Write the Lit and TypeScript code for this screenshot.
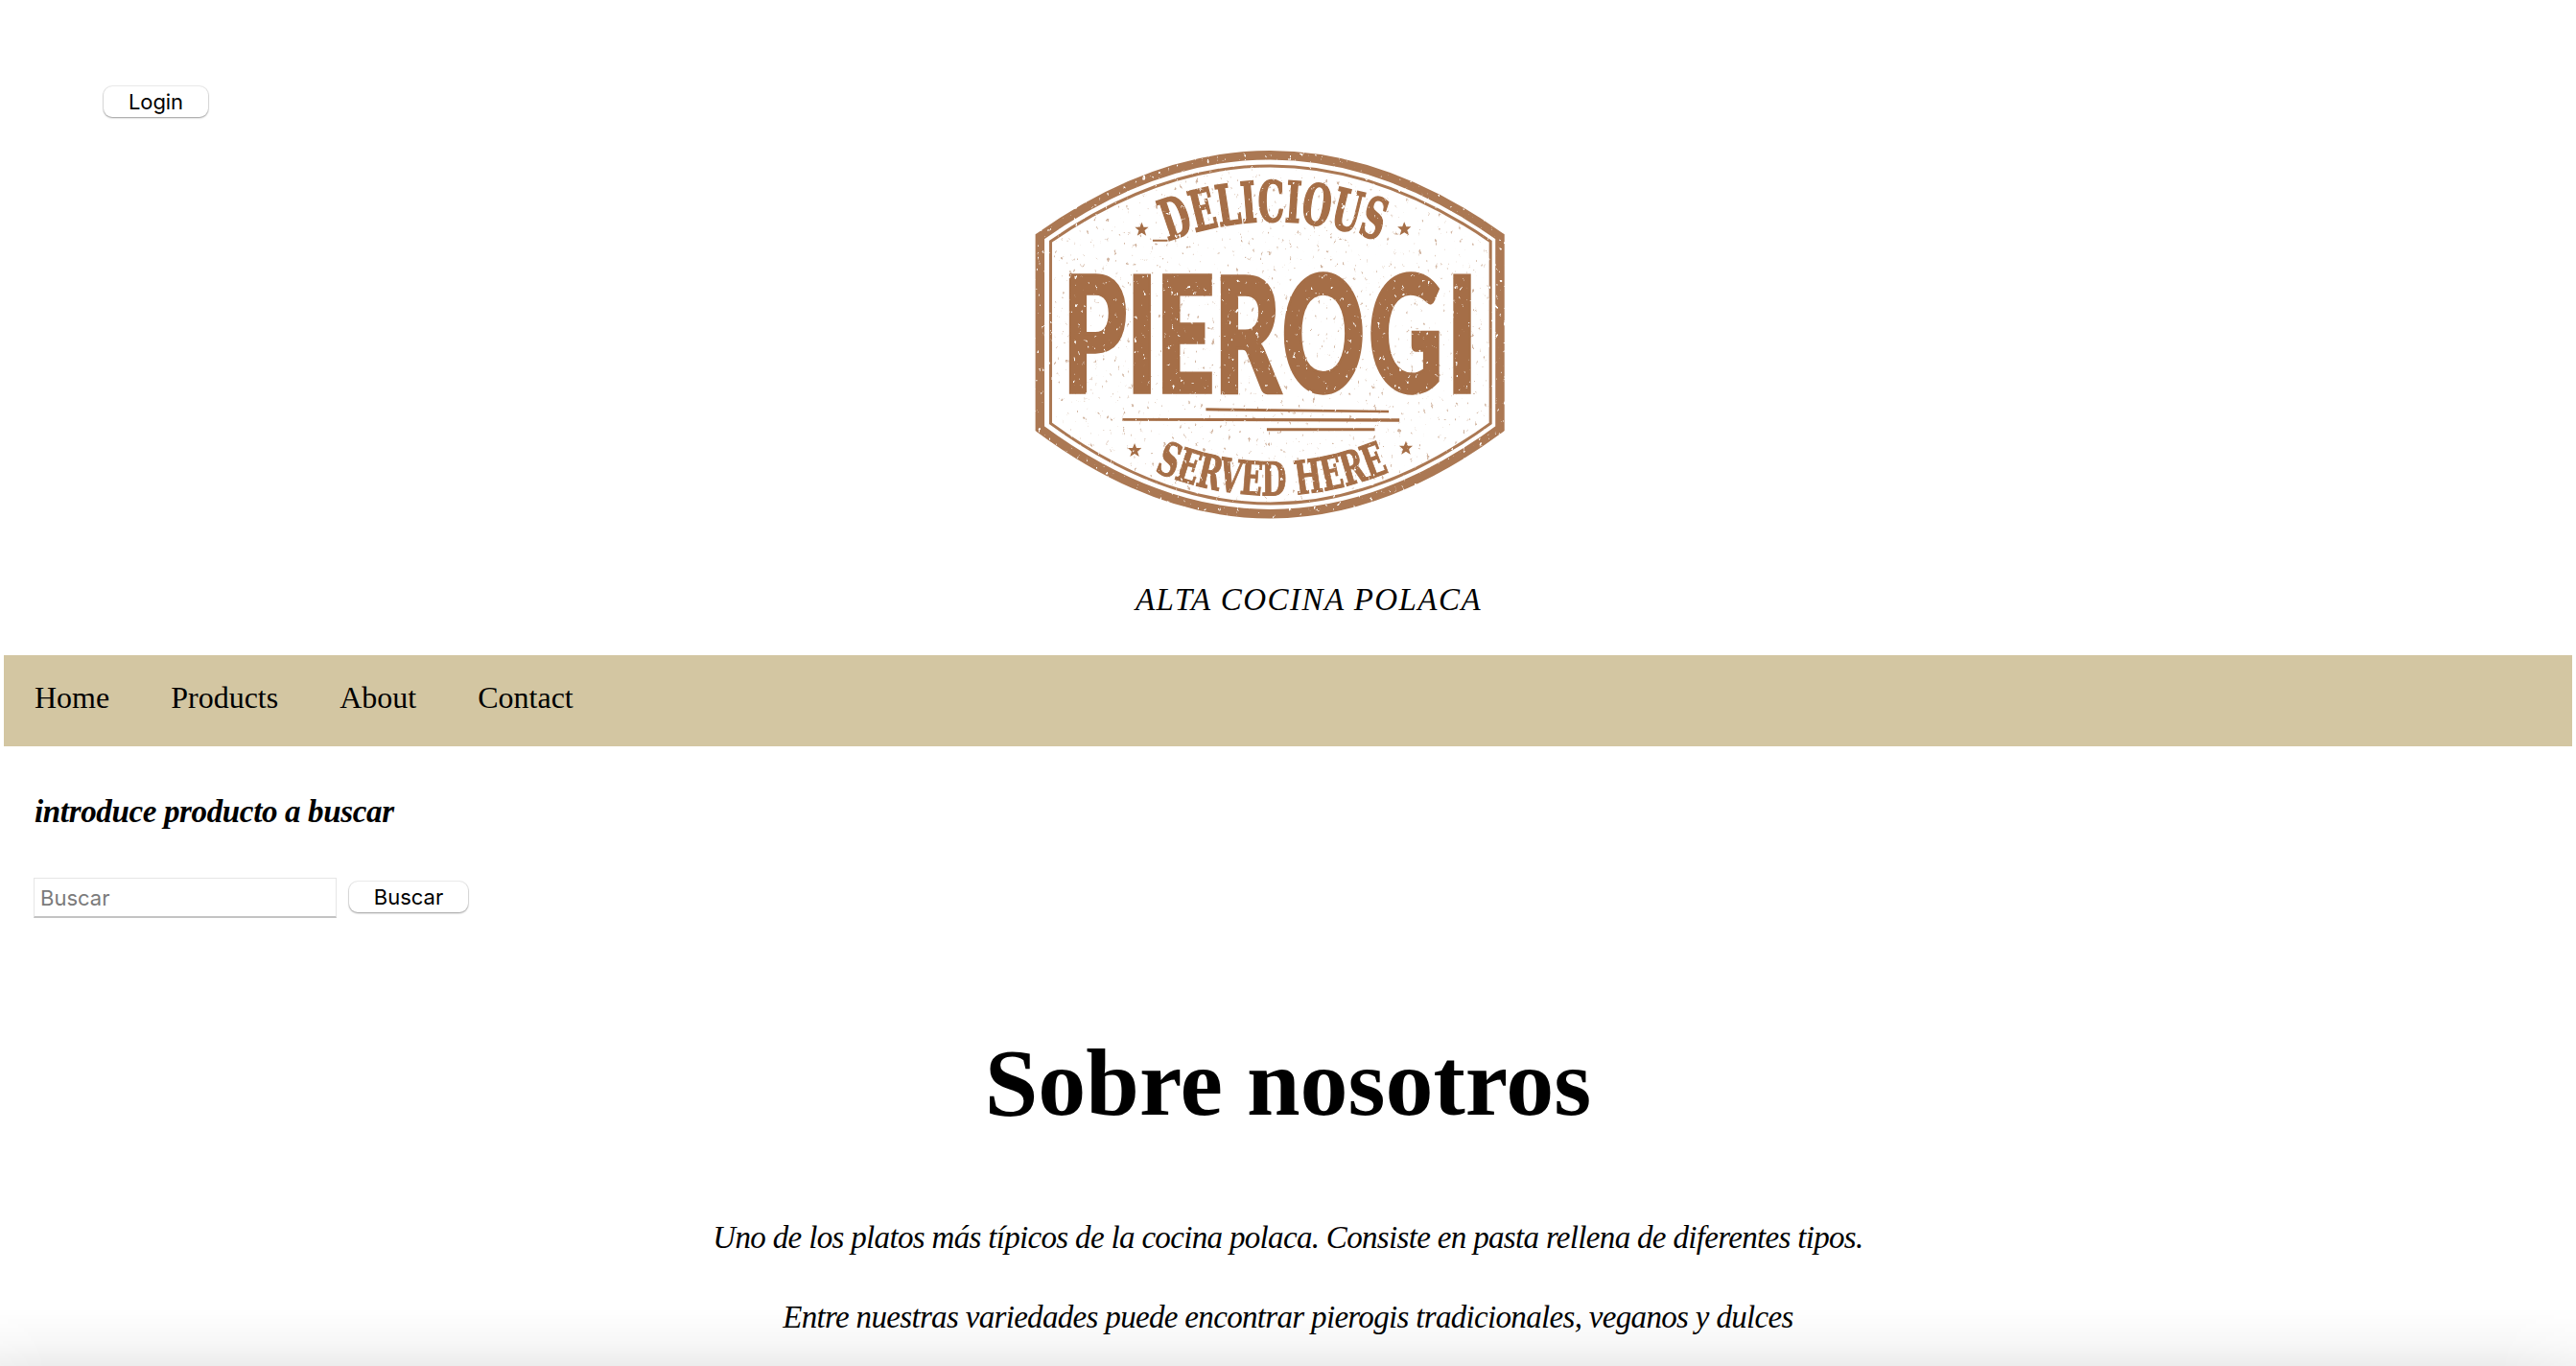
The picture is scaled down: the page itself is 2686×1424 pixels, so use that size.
import { LitElement, html, css, svg } from "lit";
import { customElement } from "lit/decorators.js";

const STAR = "M0-22 6-7 21-7 9 4 14 20 0 11-14 20-9 4-21-7-6-7Z";
const STARS = [
  [386, 297],
  [1196, 296],
  [364, 988],
  [1201, 981],
];

@customElement("pierogi-logo")
class PierogiLogo extends LitElement {
  static styles = css`
    :host { display: block; width: 530px; height: 420px; }
    .badge { display: block; width: 100%; height: 100%; }
    .frame { fill: none; stroke: #ab7853; }
    .outer { stroke-width: 28; }
    .inner { stroke-width: 9; }
    .ink { fill: #a56e46; }
    .name { font: 900 504px Lato, sans-serif; stroke: #a56e46; stroke-width: 10; }
    .arc {
      font: bold 176px "DejaVu Serif Condensed", "DejaVu Serif", serif;
      font-stretch: condensed;
      stroke: #a56e46;
      stroke-width: 5;
    }
    .arc.small { font-size: 145px; stroke-width: 3; }
  `;
  render() {
    return html`<svg class="badge" viewBox="0 0 1568 1260" preserveAspectRatio="none">
      <defs>
        <filter id="worn" x="0" y="0" width="1568" height="1260" filterUnits="userSpaceOnUse">
          <feTurbulence type="fractalNoise" baseFrequency="0.08 0.055" numOctaves="4" seed="8" result="n" />
          <feColorMatrix in="n" type="matrix" values="0 0 0 0 0  0 0 0 0 0  0 0 0 0 0  9 0 0 0 -6.35" result="holes" />
          <feComposite in="SourceGraphic" in2="holes" operator="out" />
        </filter>
        <filter id="dust" x="0" y="0" width="1568" height="1260" filterUnits="userSpaceOnUse">
          <feTurbulence type="fractalNoise" baseFrequency="0.08 0.05" numOctaves="4" seed="21" result="n" />
          <feColorMatrix in="n" type="matrix" values="0 0 0 0 0  0 0 0 0 0  0 0 0 0 0  9 0 0 0 -6.3" result="dots" />
          <feComposite in="SourceGraphic" in2="dots" operator="in" />
        </filter>
        <path id="top" d="M466 335Q790 211 1122 335" />
        <path id="bottom" d="M424 1054Q785 1204 1150 1056" />
      </defs>
      <path class="ink" opacity=".5" filter="url(#dust)" d="M115 340Q782-125 1455 340V900Q782 1400 115 900Z" />
      <g filter="url(#worn)">
        <path class="frame outer" d="M72 320Q782-190 1491 320V920Q782 1454 72 920Z" />
        <path class="frame inner" d="M105 335Q782-137 1462 335V904Q782 1406 105 904Z" />
        <text class="ink name" y="807" transform="scale(.63 1)" x="224 538 681 966 1297 1722 2105">PIEROGI</text>
        <text class="ink arc" textLength="668" lengthAdjust="spacingAndGlyphs"><textPath href="#top" textLength="668" lengthAdjust="spacingAndGlyphs">DELICIOUS</textPath></text>
        <text class="ink arc small" textLength="746" lengthAdjust="spacingAndGlyphs"><textPath href="#bottom" textLength="746" lengthAdjust="spacingAndGlyphs">SERVED HERE</textPath></text>
        <path class="ink" d="M584 856 1148 863V871L584 865ZM327 888 1181 889V899L327 896ZM772 919H1105V928H772ZM420 329H466V335H420Z" />
        ${STARS.map(([x, y]) => svg`<path class="ink" d=${STAR} transform="translate(${x} ${y})" />`)}
      </g>
    </svg>`;
  }
}

@customElement("app-root")
class AppRoot extends LitElement {
  static styles = css`
    :host {
      display: block;
      position: relative;
      box-sizing: border-box;
      height: 1424px;
      overflow: hidden;
      background: #fff;
      color: #000;
      font-family: "Liberation Serif", serif;
    }
    .header { display: flex; flex-direction: column; padding-top: 90px; }
    .btn {
      box-sizing: border-box;
      height: 32px;
      border: 0;
      border-radius: 9px;
      padding: 1px 0 0;
      background: #fff;
      color: #000;
      font: 22px/31px Inter, sans-serif;
      box-shadow: 0 0 0 1px rgba(0, 0, 0, 0.07), 0 1px 2px rgba(0, 0, 0, 0.35);
    }
    .login { width: 109px; margin-left: 108px; letter-spacing: -0.1px; }
    .logo { margin: 18px 0 0 1060px; }
    .script {
      font-family: "Liberation Serif", serif;
      font-style: italic;
      font-size: 33px;
      margin: 0;
      white-space: nowrap;
    }
    .tagline { margin: 45px 0 38px 1184px; line-height: 40px; letter-spacing: 1.45px; }
    .nav {
      display: flex;
      gap: 64px;
      box-sizing: border-box;
      height: 95px;
      margin: 0 4px;
      padding: 26px 32px 0;
      background: #d3c6a2;
      font-size: 32px;
      line-height: 37px;
    }
    .nav a { color: #000; text-decoration: none; }
    .prompt { margin: 48px 0 0 36px; line-height: 40px; font-weight: bold; letter-spacing: -0.35px; }
    .search { display: flex; align-items: center; gap: 13px; margin: 49px 0 0 35px; height: 42px; }
    .field {
      box-sizing: border-box;
      width: 316px;
      height: 42px;
      border: 1px solid #e6e6e6;
      border-bottom: 2px solid #c3c3c3;
      padding: 1px 6px 0;
      font: 22px Inter, sans-serif;
      outline: 0;
    }
    .field::placeholder { color: #7b7b7b; opacity: 1; }
    .go { width: 124px; margin-top: -2px; }
    .about { text-align: center; }
    .title { margin: 114px 0 0; font-size: 100px; line-height: 115px; }
    .about .script { line-height: 42px; letter-spacing: -0.67px; }
    .lead { margin-top: 83px; }
    .more { margin-top: 41px; }
    .fade {
      position: absolute;
      left: 0;
      right: 0;
      bottom: 0;
      height: 60px;
      background: linear-gradient(rgba(0, 0, 0, 0), rgba(0, 0, 0, 0.03) 60%, rgba(0, 0, 0, 0.075));
      mask-image: linear-gradient(90deg, rgba(0, 0, 0, 0.8), #000 50px calc(100% - 80px), rgba(0, 0, 0, 0.65));
      pointer-events: none;
    }
  `;
  render() {
    return html`
      <header class="header">
        <button class="btn login">Login</button>
        <pierogi-logo class="logo"></pierogi-logo>
        <p class="script tagline">ALTA COCINA POLACA</p>
      </header>
      <nav class="nav">
        ${["Home", "Products", "About", "Contact"].map((t) => html`<a href="#">${t}</a>`)}
      </nav>
      <h3 class="script prompt">introduce producto a buscar</h3>
      <div class="search">
        <input class="field" placeholder="Buscar" />
        <button class="btn go">Buscar</button>
      </div>
      <main class="about">
        <h1 class="title">Sobre nosotros</h1>
        <p class="script lead">Uno de los platos más típicos de la cocina polaca. Consiste en pasta rellena de diferentes tipos.</p>
        <p class="script more">Entre nuestras variedades puede encontrar pierogis tradicionales, veganos y dulces</p>
      </main>
      <div class="fade"></div>
    `;
  }
}
